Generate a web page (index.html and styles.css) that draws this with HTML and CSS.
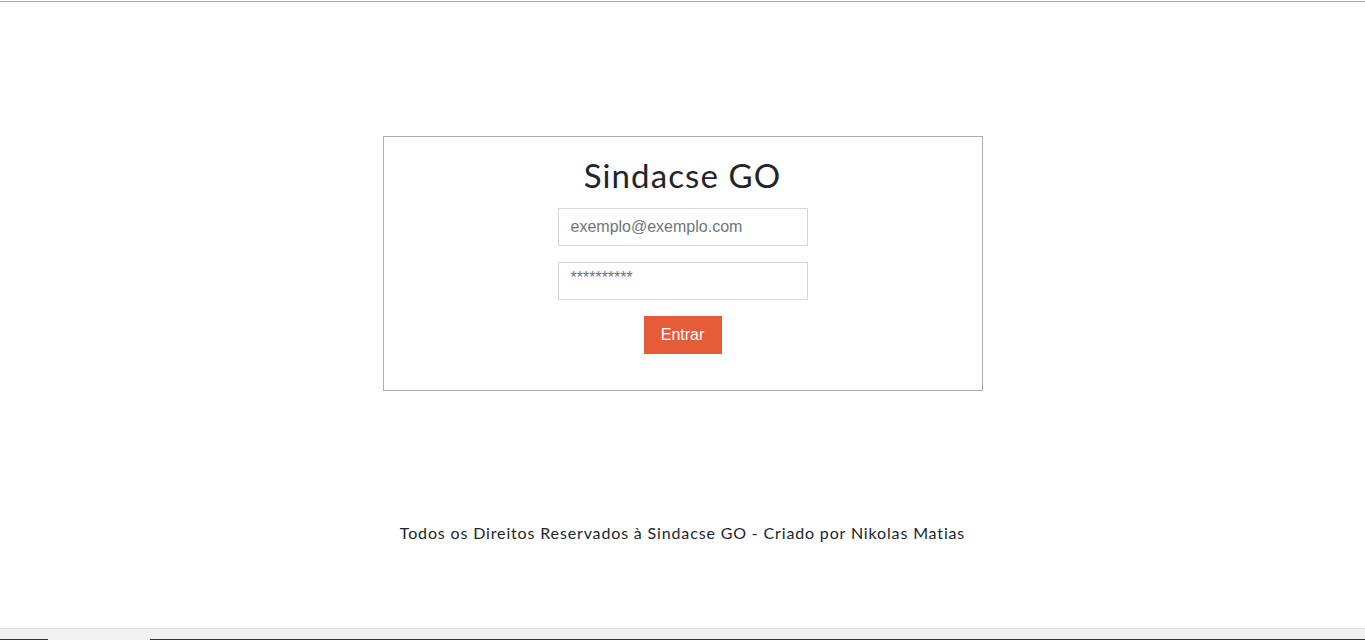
FILE: index.html
```html
<!DOCTYPE html>
<html lang="pt-BR">
<head>
<meta charset="utf-8">
<title>Sindacse GO</title>
<link rel="stylesheet" href="styles.css">
</head>
<body>
<div class="top-line"></div>
<main class="page">
  <section class="card">
    <h1 class="title">Sindacse GO</h1>
    <form class="form">
      <input class="field" type="email" placeholder="exemplo@exemplo.com">
      <input class="field field-pass" type="text" placeholder="**********">
      <button class="btn" type="button">Entrar</button>
    </form>
  </section>
  <footer class="footer">Todos os Direitos Reservados à Sindacse GO - Criado por Nikolas Matias</footer>
</main>
<div class="taskbar"><span class="tb-left"></span><span class="tb-right"></span></div>
</body>
</html>
```
FILE: styles.css
```css
html, body {
  margin: 0;
  padding: 0;
  background: #fff;
  height: 640px;
  overflow: hidden;
}
body {
  font-family: "Lato", "Noto Sans", sans-serif;
  color: #212529;
  display: flex;
  flex-direction: column;
}
.top-line {
  margin-top: 1px;
  height: 1px;
  background: #acacac;
}
.page {
  flex: 1;
  display: flex;
  flex-direction: column;
  align-items: center;
  padding-top: 134px;
}
.card {
  box-sizing: border-box;
  width: 600px;
  height: 255px;
  border: 1px solid #adadad;
  display: flex;
  flex-direction: column;
  align-items: center;
  padding-top: 18px;
}
.title {
  margin: 0;
  font-size: 33px;
  font-weight: 400;
  line-height: 40px;
  letter-spacing: 1.1px;
  color: #212529;
}
.form {
  margin-top: 13px;
  display: flex;
  flex-direction: column;
  align-items: center;
}
.field {
  box-sizing: border-box;
  width: 250px;
  height: 38px;
  border: 1px solid #d6d6d6;
  border-radius: 0;
  padding: 0 12px;
  font-family: "Liberation Sans", Arial, sans-serif;
  font-size: 16px;
  margin: 0 0 16px 0;
  outline: none;
}
.field::placeholder {
  color: #6c757d;
  opacity: 1;
}
.field-pass {
  padding-bottom: 6px;
}
.btn {
  width: 78px;
  height: 38px;
  border: none;
  border-radius: 0;
  background: #e65c39;
  color: #fff;
  font-family: "Liberation Sans", Arial, sans-serif;
  font-size: 16px;
  padding: 0;
}
.footer {
  margin-top: 132px;
  font-size: 16px;
  color: #212529;
  letter-spacing: 0.85px;
}
.taskbar {
  height: 11px;
  border-top: 1px solid #d9d9d9;
  background: #f1f1f1;
  position: relative;
}
.tb-left {
  position: absolute;
  left: 0;
  bottom: 0;
  width: 48px;
  height: 1px;
  background: #333;
}
.tb-right {
  position: absolute;
  left: 150px;
  right: 0;
  bottom: 0;
  height: 1px;
  background: #333;
}
```
